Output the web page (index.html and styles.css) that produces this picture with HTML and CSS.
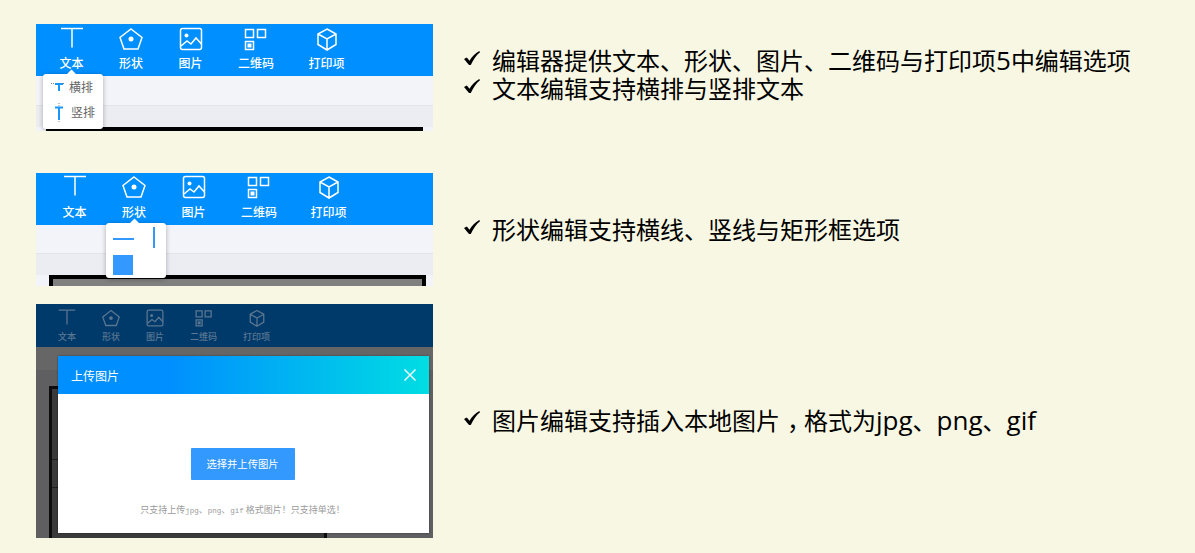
FILE: index.html
```html
<!DOCTYPE html>
<html lang="zh-CN">
<head>
<meta charset="utf-8">
<title>编辑器选项</title>
<link rel="stylesheet" href="styles.css">
</head>
<body>
<svg class="defs" width="0" height="0" aria-hidden="true">
  <symbol id="i-text" viewBox="0 0 24 24"><path d="M1 1.5H23M12 1.5V20.5"/></symbol>
  <symbol id="i-shape" viewBox="0 0 24 24"><path d="M12 2L23 10.500L19 22H5L1 10.500Z"/><circle class="fill" cx="12" cy="12" r="2.500"/></symbol>
  <symbol id="i-image" viewBox="0 0 24 24"><rect x="1.500" y="1.500" width="21" height="21" rx="2"/><circle class="fill" cx="7.500" cy="8.500" r="2"/><path d="M2 19L8 14L12 17L17 11L22.500 17"/></symbol>
  <symbol id="i-qr" viewBox="0 0 24 24"><rect x="1.500" y="2.500" width="8" height="8"/><rect x="13.500" y="2.500" width="8" height="8"/><rect x="1.500" y="14.500" width="8" height="8"/><rect class="fill" x="3.500" y="16.500" width="4" height="4"/></symbol>
  <symbol id="i-box" viewBox="0 0 24 24"><path d="M12 2L21 7V17.500L12 23L3 17.500V7ZM3 7L12 12L21 7M12 12V23"/></symbol>
  <symbol id="i-check" viewBox="0 0 16 14"><path class="solid" d="M0 8L2.800 6.500L5.500 9.800C8 5.500 11 2.500 15.300 0L16 1.200C12.500 4 9.500 8 6.800 14H5Z"/></symbol>
</svg>

<main class="page">
  <section class="row">
    <div class="panel panel-text">
      <nav class="toolbar">
        <div class="tool"><svg class="icon"><use href="#i-text"/></svg><span>文本</span></div>
        <div class="tool"><svg class="icon"><use href="#i-shape"/></svg><span>形状</span></div>
        <div class="tool"><svg class="icon"><use href="#i-image"/></svg><span>图片</span></div>
        <div class="tool"><svg class="icon"><use href="#i-qr"/></svg><span>二维码</span></div>
        <div class="tool"><svg class="icon"><use href="#i-box"/></svg><span>打印项</span></div>
      </nav>
      <div class="band band-a"></div>
      <div class="band band-b"></div>
      <div class="doc-edge"></div>
      <div class="popup popup-text">
        <div class="menu-item">
          <svg class="mini" viewBox="0 0 16 16"><path class="dots" d="M0 4.500H13"/><path class="blue" d="M4 5H12M8 5V12"/></svg>
          <span>横排</span>
        </div>
        <div class="menu-item item-vert">
          <svg class="mini mini-tall" viewBox="0 0 16 24"><path class="dots" d="M8 3V22"/><path class="blue" d="M4 7.500H12M8 7.500V20"/></svg>
          <span>竖排</span>
        </div>
      </div>
    </div>
    <ul class="notes notes-first">
      <li><svg class="check"><use href="#i-check"/></svg><span class="note-text">编辑器提供文本、形状、图片、二维码与打印项<span class="latin">5</span>中编辑选项</span></li>
      <li><svg class="check"><use href="#i-check"/></svg><span class="note-text">文本编辑支持横排与竖排文本</span></li>
    </ul>
  </section>

  <section class="row">
    <div class="panel panel-shape">
      <nav class="toolbar">
        <div class="tool"><svg class="icon"><use href="#i-text"/></svg><span>文本</span></div>
        <div class="tool"><svg class="icon"><use href="#i-shape"/></svg><span>形状</span></div>
        <div class="tool"><svg class="icon"><use href="#i-image"/></svg><span>图片</span></div>
        <div class="tool"><svg class="icon"><use href="#i-qr"/></svg><span>二维码</span></div>
        <div class="tool"><svg class="icon"><use href="#i-box"/></svg><span>打印项</span></div>
      </nav>
      <div class="band band-c"></div>
      <div class="band band-d"></div>
      <div class="doc-frame"></div>
      <div class="popup popup-shape">
        <div class="shape-line"></div>
        <div class="shape-vline"></div>
        <div class="shape-rect"></div>
      </div>
    </div>
    <ul class="notes">
      <li><svg class="check"><use href="#i-check"/></svg><span class="note-text">形状编辑支持横线、竖线与矩形框选项</span></li>
    </ul>
  </section>

  <section class="row">
    <div class="panel panel-upload">
      <nav class="toolbar toolbar-dim">
        <div class="tool"><svg class="icon"><use href="#i-text"/></svg><span>文本</span></div>
        <div class="tool"><svg class="icon"><use href="#i-shape"/></svg><span>形状</span></div>
        <div class="tool"><svg class="icon"><use href="#i-image"/></svg><span>图片</span></div>
        <div class="tool"><svg class="icon"><use href="#i-qr"/></svg><span>二维码</span></div>
        <div class="tool"><svg class="icon"><use href="#i-box"/></svg><span>打印项</span></div>
      </nav>
      <div class="dim-doc"></div>
      <div class="modal">
        <header class="modal-head">
          <span>上传图片</span>
          <svg class="close" viewBox="0 0 12 12"><path d="M0.500 0.500L11.500 11.500M11.500 0.500L0.500 11.500"/></svg>
        </header>
        <div class="modal-body">
          <div class="upload-btn">选择并上传图片</div>
          <p class="hint">只支持上传<span class="hint-latin">jpg</span>、<span class="hint-latin">png</span>、<span class="hint-latin">gif</span> 格式图片！只支持单选！</p>
        </div>
      </div>
    </div>
    <ul class="notes">
      <li><svg class="check"><use href="#i-check"/></svg><span class="note-text">图片编辑支持插入本地图片<span class="comma">，</span>格式为<span class="latin">jpg</span>、<span class="latin">png</span>、<span class="latin">gif</span></span></li>
    </ul>
  </section>
</main>
</body>
</html>
```
FILE: styles.css
```css
* { box-sizing: border-box; }

html, body {
  margin: 0;
  height: 100%;
}

body {
  background: #f7f7e3;
  font-family: "Noto Sans CJK SC", "Noto Sans", sans-serif;
  overflow: hidden;
}

.defs { position: absolute; }

.page {
  display: flex;
  flex-direction: column;
  padding: 24px 0 0 36px;
}

.row {
  display: flex;
  align-items: center;
  gap: 30px;
}

.row:nth-child(2) { margin-top: 42px; }
.row:nth-child(3) { margin-top: 18px; }

/* panels */
.panel {
  position: relative;
  width: 397px;
  flex: none;
  overflow: hidden;
  background: #f3f4f9;
}

.panel-text { height: 107px; }
.panel-shape { height: 113px; }
.panel-upload {
  height: 234px;
  background: linear-gradient(#666666 0 66px, #5f5f61 66px 100%);
}

.toolbar {
  display: flex;
  align-items: flex-start;
  gap: 35.5px;
  height: 52px;
  padding: 3px 0 0 23.5px;
  background: #008ffe;
  color: #ffffff;
}

.panel-text .tool:last-child { margin-left: -1px; }
.panel-shape .tool:last-child { margin-left: -2px; }
.panel-shape .toolbar { padding-left: 26.5px; padding-top: 2px; }
.panel-shape .tool span { margin-top: 5px; }

.tool {
  display: flex;
  flex-direction: column;
  align-items: center;
  font-size: 12px;
  font-weight: 500;
  line-height: 16px;
}

.tool span { margin-top: 4px; }

.icon {
  width: 24px;
  height: 24px;
  fill: none;
  stroke: currentColor;
  stroke-width: 1.5;
}

.icon .fill, symbol .fill { fill: currentColor; stroke: none; }

.toolbar-dim {
  height: 43px;
  gap: 26px;
  padding: 5px 0 0 22px;
  background: #003a6b;
  color: #5a7690;
}

.toolbar-dim .tool {
  font-size: 9px;
  line-height: 12px;
}

.toolbar-dim .tool span { margin-top: 4px; }
.toolbar-dim .icon { width: 18px; height: 18px; stroke-width: 1.7; }

/* document bands */
.band-a { height: 30px; border-bottom: 1px solid #e3e4ea; }
.band-b { height: 21px; background: #ecedf3; }
.doc-edge { height: 4px; margin: 0 10px; background: #000000; }

.band-c { height: 29px; border-bottom: 1px solid #e3e4ea; }
.band-d { height: 21px; background: #ecedf3; }
.doc-frame {
  height: 11px;
  margin: 0 7px 0 13px;
  background: #808080;
  border: 4px solid #000000;
  border-bottom: 0;
}

.dim-doc {
  position: absolute;
  left: 13px;
  top: 82px;
  width: 278px;
  height: 152px;
  background:
    linear-gradient(#1f1f1f, #1f1f1f) 0 70px / 100% 1px no-repeat,
    linear-gradient(#1f1f1f, #1f1f1f) 0 98px / 100% 1px no-repeat,
    #3a3a3a;
  border: 3px solid #0d0d0d;
  border-bottom: 0;
}

/* popups */
.popup {
  position: absolute;
  width: 60px;
  height: 55px;
  background: #ffffff;
  border-radius: 3px;
  box-shadow: 0 1px 5px rgba(0, 0, 0, 0.3);
}

.popup::before {
  content: "";
  position: absolute;
  top: -3px;
  left: 25px;
  width: 7px;
  height: 7px;
  background: #ffffff;
  transform: rotate(45deg);
}

.popup-text { left: 7px; top: 50px; }
.popup-shape { left: 70px; top: 50px; }

.menu-item {
  display: flex;
  align-items: center;
  height: 25px;
  font-size: 12px;
  line-height: 16px;
  color: #666666;
  padding-left: 8px;
  gap: 2px;
}

.mini {
  width: 16px;
  height: 16px;
  flex: none;
}

.mini-tall { height: 24px; }
.item-vert { gap: 4px; }

.dots {
  fill: none;
  stroke: #888888;
  stroke-width: 1;
  stroke-dasharray: 1 1;
}

.blue {
  fill: none;
  stroke: #1a96ff;
  stroke-width: 2;
}

.shape-line {
  position: absolute;
  left: 7px;
  top: 15px;
  width: 21px;
  height: 2px;
  background: #3399ff;
}

.shape-vline {
  position: absolute;
  left: 47px;
  top: 4px;
  width: 2px;
  height: 21px;
  background: #3399ff;
}

.shape-rect {
  position: absolute;
  left: 7px;
  top: 32px;
  width: 20px;
  height: 20px;
  background: #3399ff;
}

/* modal */
.modal {
  position: absolute;
  left: 22px;
  top: 52px;
  width: 371px;
  height: 177px;
  background: #ffffff;
  box-shadow: 0 0 2px rgba(0, 0, 0, 0.4);
}

.modal-head {
  display: flex;
  align-items: center;
  justify-content: space-between;
  height: 38px;
  padding: 0 13px;
  background: linear-gradient(90deg, #008ffe 30%, #00dde3 100%);
  color: #ffffff;
  font-size: 12px;
}

.close {
  width: 12px;
  height: 12px;
  fill: none;
  stroke: #ffffff;
  stroke-width: 1.4;
}

.modal-body {
  display: flex;
  flex-direction: column;
  align-items: center;
  padding: 54px 2px 0 0;
}

.upload-btn {
  width: 104px;
  height: 32px;
  background: #3399ff;
  border-radius: 1px;
  color: #ffffff;
  font-size: 10.3px;
  line-height: 32px;
  text-align: center;
}

.hint {
  margin: 22px 0 0;
  font-size: 9px;
  line-height: 16px;
  color: #9a9a9a;
  white-space: nowrap;
}

.hint-latin {
  font-family: "Liberation Mono", monospace;
  font-size: 7.5px;
}

/* right-hand notes */
.notes {
  list-style: none;
  margin: -2px 0 0;
  padding: 0;
  color: #000000;
  font-family: "Noto Sans CJK SC", sans-serif;
  font-size: 24px;
  line-height: 28px;
}

.notes-first { margin-top: 0; padding-bottom: 7px; }

.notes li {
  display: flex;
  align-items: center;
  gap: 12px;
  white-space: nowrap;
}

.note-text {
  display: block;
  height: 28px;
}

.latin {
  font-family: "Open Sans", sans-serif;
  font-size: 26px;
  line-height: 1;
}

.comma {
  margin: 0 5px 0 7px;
  font-feature-settings: "halt";
  line-height: 1;
}

.check {
  width: 16px;
  height: 14px;
  flex: none;
  margin-left: 1px;
  margin-top: -4px;
}

.solid { fill: #000000; stroke: none; }
```
